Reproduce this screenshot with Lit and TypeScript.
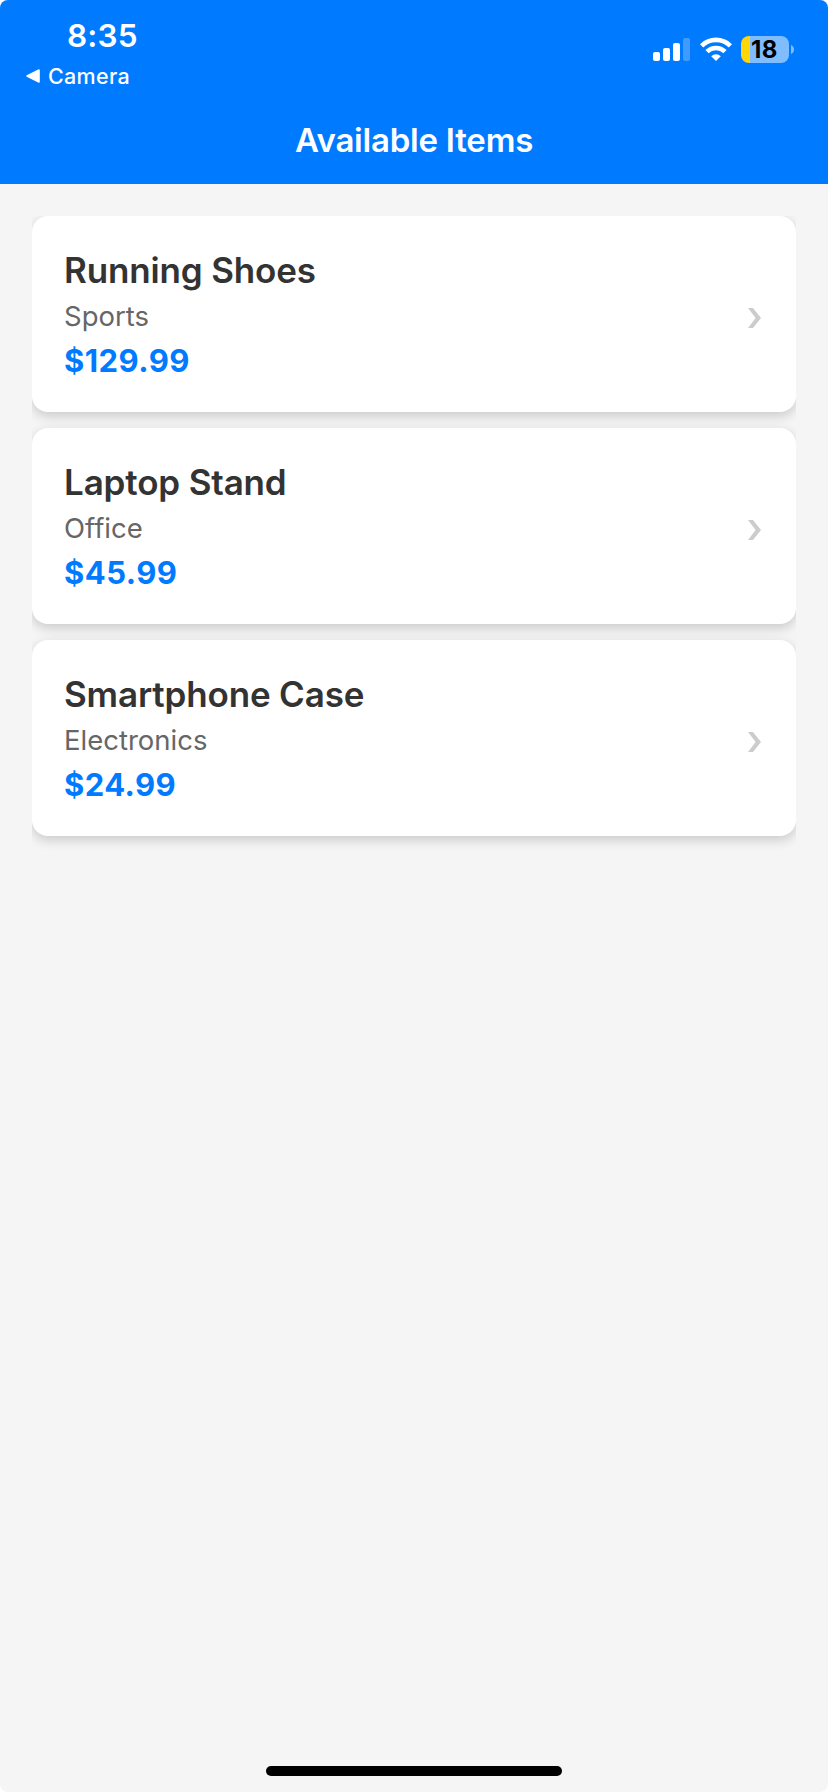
import { LitElement, html, css } from "lit";
import { customElement, property } from "lit/decorators.js";

const ITEMS = [
  { name: "Running Shoes", category: "Sports", price: 129.99 },
  { name: "Laptop Stand", category: "Office", price: 45.99 },
  { name: "Smartphone Case", category: "Electronics", price: 24.99 },
];

@customElement("status-bar")
class StatusBar extends LitElement {
  static styles = css`
    :host { display: flex; justify-content: space-between; height: 100px; color: #fff; }
    .left { display: flex; flex-direction: column; padding: 16px 0 0 26px; }
    .time { margin-left: 41px; font-size: 31.5px; line-height: 40px; font-weight: 600; letter-spacing: 0.2px; }
    .back { display: flex; align-items: center; gap: 8px; font-size: 21.5px; line-height: 24px; font-weight: 500; letter-spacing: 0.3px; margin-top: 8px; }
    .right { display: flex; align-items: flex-start; padding: 36px 34px 0 0; }
    .signal { margin: 2px 10px 0 0; }
    .wifi { margin: 1px 9px 0 0; }
    .battery { display: flex; align-items: center; justify-content: center; width: 48px; height: 27px; border-radius: 8px; box-sizing: border-box; padding-right: 1px; background: linear-gradient(90deg, #ffd60a 9px, #80bdff 9px); color: #000; font-size: 24px; line-height: 27px; font-weight: 700; letter-spacing: 0.5px; }
    .nub { margin: 9px 0 0 2px; }
    svg { display: block; }
  `;
  render() {
    return html`
      <div class="left">
        <div class="time">8:35</div>
        <div class="back">
          <svg width="14" height="14" viewBox="0 0 14 14"><path d="M1 7 13 1v12z" fill="#fff" stroke="#fff" stroke-width="1.6" stroke-linejoin="round"/></svg>
          <span>Camera</span>
        </div>
      </div>
      <div class="right">
        <svg class="signal" width="37" height="23" viewBox="0 0 37 23" fill="#fff">
          <rect x="0" y="14" width="7" height="9" rx="2"/>
          <rect x="10" y="10" width="7" height="13" rx="2"/>
          <rect x="20" y="5" width="7" height="18" rx="2"/>
          <rect x="30" y="0" width="7" height="23" rx="2" opacity="0.25"/>
        </svg>
        <svg class="wifi" width="32" height="25" viewBox="0 0 32 25" fill="none" stroke="#fff" stroke-width="4.6">
          <path d="M1.6 8.8a20.5 20.5 0 0 1 28.8 0"/>
          <path d="M7 14.6a13 13 0 0 1 18 0"/>
          <path d="M11.2 19.2a7 7 0 0 1 9.6 0L16 24.1z" fill="#fff" stroke="none"/>
        </svg>
        <div class="battery">18</div>
        <svg class="nub" width="3" height="9" viewBox="0 0 3 9"><path d="M0 0q3 1.5 3 4.5T0 9z" fill="#80bdff"/></svg>
      </div>
    `;
  }
}

@customElement("item-card")
class ItemCard extends LitElement {
  @property() name = "";
  @property() category = "";
  @property({ type: Number }) price = 0;
  static styles = css`
    :host { display: flex; align-items: center; justify-content: space-between; box-sizing: border-box; height: 196px; padding: 32px; border-radius: 16px; background: #fff; box-shadow: 0 4px 12px rgba(0, 0, 0, 0.18); }
    .name { font-size: 35px; line-height: 44px; font-weight: 600; letter-spacing: -0.15px; color: #333; }
    .category { margin-top: 4px; font-size: 27.5px; line-height: 40px; color: #666; }
    .price { margin-top: 5px; font-size: 31px; line-height: 40px; font-weight: 700; letter-spacing: 0.45px; color: #007aff; }
    .chevron { display: block; margin: 8px 3px 0 0; }
  `;
  render() {
    return html`
      <div>
        <div class="name">${this.name}</div>
        <div class="category">${this.category}</div>
        <div class="price">$${this.price.toFixed(2)}</div>
      </div>
      <svg class="chevron" width="13" height="20" viewBox="0 0 13 20"><path d="M0 0h5l8 10-8 10H0l7.6-10z" fill="#ccc"/></svg>
    `;
  }
}

@customElement("app-root")
class AppRoot extends LitElement {
  static styles = css`
    :host { display: block; background: #fff; font-family: Inter, "Liberation Sans", sans-serif; }
    .screen { display: flex; flex-direction: column; height: 1792px; background: #f5f5f5; border-radius: 8px; overflow: hidden; }
    .header { height: 184px; background: #007aff; color: #fff; }
    .title { text-align: center; font-size: 33px; line-height: 80px; font-weight: 600; letter-spacing: -0.22px; }
    .list { display: flex; flex-direction: column; flex: 1; gap: 16px; margin: 32px 32px 0; overflow: hidden; }
    .home { align-self: center; width: 296px; height: 10px; border-radius: 5px; background: #000; margin-bottom: 16px; }
  `;
  render() {
    return html`
      <div class="screen">
        <div class="header">
          <status-bar></status-bar>
          <div class="title">Available Items</div>
        </div>
        <div class="list">
          ${ITEMS.map((i) => html`<item-card .name=${i.name} .category=${i.category} .price=${i.price}></item-card>`)}
        </div>
        <div class="home"></div>
      </div>
    `;
  }
}
